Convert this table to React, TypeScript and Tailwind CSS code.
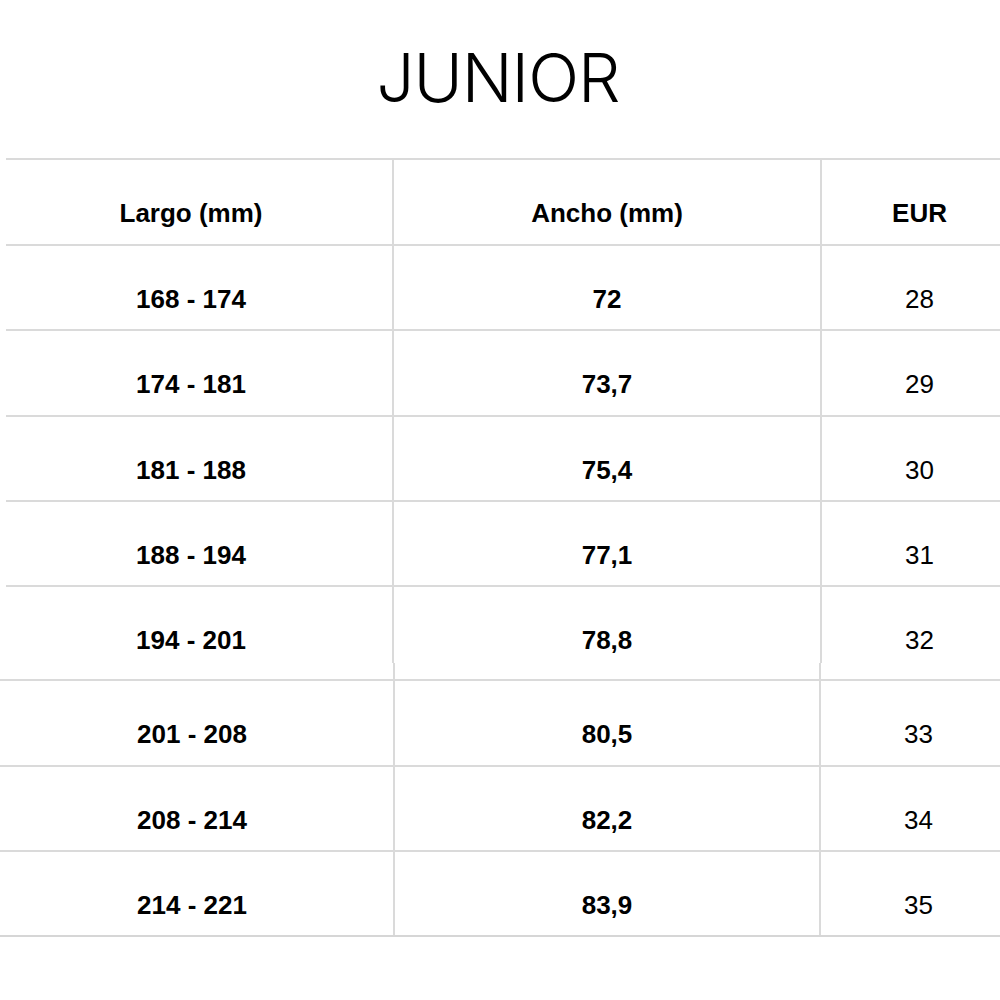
import React from "react";

type Row = { largo: string; ancho: string; eur: string; h: string };

// first block of the chart (header + first five sizes)
const topRows: Row[] = [
  { largo: "168 - 174", ancho: "72", eur: "28", h: "h-[85px]" },
  { largo: "174 - 181", ancho: "73,7", eur: "29", h: "h-[86px]" },
  { largo: "181 - 188", ancho: "75,4", eur: "30", h: "h-[85px]" },
  { largo: "188 - 194", ancho: "77,1", eur: "31", h: "h-[85px]" },
  { largo: "194 - 201", ancho: "78,8", eur: "32", h: "h-[78px]" },
];

// second block, slightly shifted
const bottomRows: Row[] = [
  { largo: "201 - 208", ancho: "80,5", eur: "33", h: "h-[86px]" },
  { largo: "208 - 214", ancho: "82,2", eur: "34", h: "h-[85px]" },
  { largo: "214 - 221", ancho: "83,9", eur: "35", h: "h-[85px]" },
];

const cellText = "text-[26px] leading-[30px] text-black";

export default function App() {
  return (
    <div
      className="w-[1000px] h-[1000px] bg-white overflow-hidden"
      style={{ fontFamily: '"Liberation Sans", Arial, sans-serif' }}
    >
      <div className="h-[158px] flex justify-center pt-[44px]">
        <h1
          className="text-[67px] leading-[67px] font-light text-black tracking-[-1px] pr-[4px]"
          style={{ fontFamily: "Inter, sans-serif" }}
        >
          JUNIOR
        </h1>
      </div>

      {/* top block */}
      <div className="ml-[6px]">
        <div className="grid grid-cols-[386px_428px_1fr] h-[86px] border-t-2 border-[#dadada]">
          <div className={`pt-[38px] pr-[16px] text-center font-bold ${cellText}`}>Largo (mm)</div>
          <div className={`pt-[38px] text-center font-bold border-l-2 border-[#dadada] ${cellText}`}>Ancho (mm)</div>
          <div className={`pt-[38px] pl-[17px] text-center font-bold border-l-2 border-[#dadada] ${cellText}`}>EUR</div>
        </div>
        {topRows.map((r) => (
          <div key={r.largo} className={`grid grid-cols-[386px_428px_1fr] ${r.h} border-t-2 border-[#dadada]`}>
            <div className={`pt-[38px] pr-[16px] text-center font-bold ${cellText}`}>{r.largo}</div>
            <div className={`pt-[38px] text-center font-bold border-l-2 border-[#dadada] ${cellText}`}>{r.ancho}</div>
            <div className={`pt-[38px] pl-[17px] text-center border-l-2 border-[#dadada] ${cellText}`}>{r.eur}</div>
          </div>
        ))}
      </div>

      {/* bottom block */}
      <div>
        <div className="grid grid-cols-[393px_426px_1fr] h-[16px]">
          <div />
          <div className="border-l-2 border-[#dadada]" />
          <div className="border-l-2 border-[#dadada]" />
        </div>
        {bottomRows.map((r) => (
          <div key={r.largo} className={`grid grid-cols-[393px_426px_1fr] ${r.h} border-t-2 border-[#dadada]`}>
            <div className={`pt-[38px] pr-[9px] text-center font-bold ${cellText}`}>{r.largo}</div>
            <div className={`pt-[38px] text-center font-bold border-l-2 border-[#dadada] ${cellText}`}>{r.ancho}</div>
            <div className={`pt-[38px] pl-[16px] text-center border-l-2 border-[#dadada] ${cellText}`}>{r.eur}</div>
          </div>
        ))}
        <div className="border-t-2 border-[#d6d6d6]" />
      </div>
    </div>
  );
}
